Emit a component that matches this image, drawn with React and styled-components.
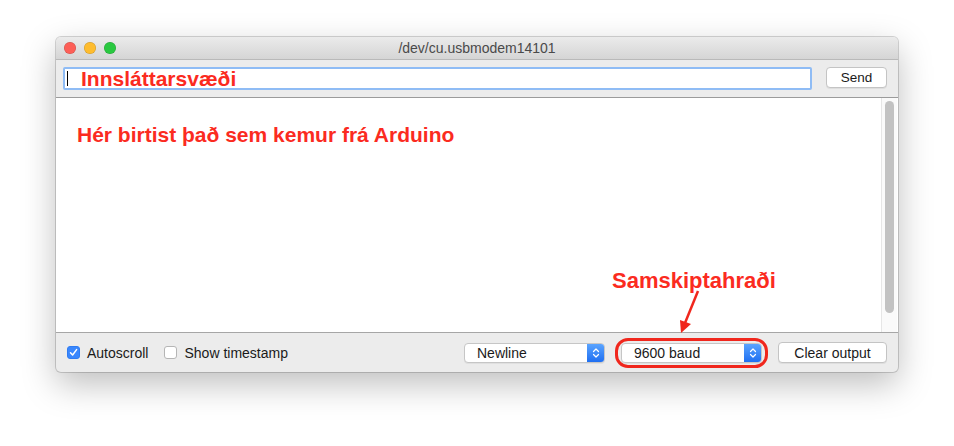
import React from 'react';
import styled, { createGlobalStyle } from 'styled-components';

const Global = createGlobalStyle`
  html, body {
    margin: 0;
    background: #ffffff;
  }
  body {
    font-family: "Liberation Sans", Arial, sans-serif;
  }
`;

const Page = styled.div`
  width: 954px;
  height: 446px;
  padding: 37px 0 0 56px;
  box-sizing: border-box;
`;

const Window = styled.div`
  position: relative;
  width: 842px;
  height: 335px;
  display: flex;
  flex-direction: column;
  border-radius: 5px;
  background: #ececec;
  box-shadow: 0 0 0 1px rgba(0, 0, 0, 0.16), 0 12px 34px rgba(0, 0, 0, 0.26);
  overflow: hidden;
`;

const TitleBar = styled.div`
  height: 22px;
  flex: none;
  display: flex;
  align-items: center;
  justify-content: center;
  position: relative;
  background: linear-gradient(#ebebeb, #d5d5d5);
  border-bottom: 1px solid #b9b9b9;
  font-size: 14px;
  color: #4a4a4a;
`;

const Lights = styled.div`
  position: absolute;
  left: 8px;
  top: 5px;
  display: flex;
  gap: 8px;
`;

const Light = styled.span`
  width: 12px;
  height: 12px;
  border-radius: 50%;
  background: ${(p) => p.color};
  box-shadow: inset 0 0 0 0.5px rgba(0, 0, 0, 0.2);
`;

const InputRow = styled.div`
  flex: none;
  display: flex;
  align-items: flex-start;
  padding: 7px 11px 7px 7px;
  gap: 14px;
  background: #ececec;
`;

const Field = styled.div`
  flex: 1;
  height: 19px;
  display: flex;
  align-items: center;
  background: #ffffff;
  border: 2px solid #8fbcf5;
  border-radius: 2px;
  padding-left: 2px;
`;

const Caret = styled.span`
  width: 1px;
  height: 15px;
  background: #000000;
`;

const Big = styled.span`
  font-weight: bold;
  font-size: ${(p) => p.size || 21}px;
  color: #fb2b1f;
  white-space: nowrap;
`;

const FieldText = styled(Big)`
  margin-left: 13px;
  line-height: 19px;
`;

const Button = styled.button`
  height: 21px;
  padding: 0;
  width: ${(p) => p.width}px;
  background: #ffffff;
  border: 1px solid #c4c4c4;
  border-radius: 4px;
  box-shadow: 0 1px 0 rgba(0, 0, 0, 0.06);
  font-family: "Liberation Sans", Arial, sans-serif;
  font-size: ${(p) => p.size || 14}px;
  color: #1a1a1a;
`;

const Output = styled.div`
  flex: none;
  height: 234px;
  display: flex;
  background: #ffffff;
  border-top: 1px solid #9b9b9b;
  border-bottom: 1px solid #a6a6a6;
`;

const OutputText = styled.div`
  flex: 1;
  padding: 25px 0 0 21px;
`;

const ScrollTrack = styled.div`
  width: 16px;
  flex: none;
  margin-right: 1px;
  background: #fafafa;
  border-left: 1px solid #e6e6e6;
  padding: 3px 0 0 3px;
  box-sizing: border-box;
`;

const Thumb = styled.div`
  width: 9px;
  height: 212px;
  border-radius: 5px;
  background: #c2c2c2;
`;

const BottomBar = styled.div`
  flex: 1;
  display: flex;
  align-items: center;
  padding: 0 11px;
  font-size: 14px;
  color: #1a1a1a;
`;

const Check = styled.label`
  display: flex;
  align-items: center;
  gap: 7px;
  margin-right: ${(p) => p.gap || 0}px;
`;

const Box = styled.span`
  width: 13px;
  height: 13px;
  box-sizing: border-box;
  border-radius: 3px;
  display: flex;
  align-items: center;
  justify-content: center;
  background: ${(p) => (p.checked ? '#3a87fd' : '#ffffff')};
  border: 1px solid ${(p) => (p.checked ? '#2f7cf2' : '#b5b5b5')};
`;

const Spacer = styled.div`
  flex: 1;
`;

const Select = styled.div`
  width: 141px;
  height: 20px;
  box-sizing: border-box;
  display: flex;
  align-items: center;
  background: #ffffff;
  border: 1px solid #c6c6c6;
  border-radius: 4px;
  overflow: hidden;
  box-shadow: 0 1px 0 rgba(0, 0, 0, 0.05);
`;

const SelectLabel = styled.span`
  flex: 1;
  padding-left: 12px;
`;

const Stepper = styled.span`
  width: 17px;
  height: 100%;
  display: flex;
  align-items: center;
  justify-content: center;
  background: linear-gradient(#5aa4ff, #1f6ff1);
`;

const Ring = styled.div`
  margin: 0 10px;
  padding: 2px 3px;
  border: 3px solid #f0271d;
  border-radius: 13px;
`;

const Callout = styled.div`
  position: absolute;
  left: 556px;
  top: 231px;
`;

const Arrow = styled.svg`
  position: absolute;
  left: 614px;
  top: 252px;
`;

function Chevrons() {
  return (
    <svg width="8" height="12" viewBox="0 0 8 12">
      <path d="M1.5 4.5 L4 2 L6.5 4.5 M1.5 7.5 L4 10 L6.5 7.5" fill="none" stroke="#fff" strokeWidth="1.2" strokeLinecap="round" strokeLinejoin="round" />
    </svg>
  );
}

export default function App() {
  return (
    <Page>
      <Global />
      <Window>
        <TitleBar>
          <Lights>
            <Light color="#fd5f57" />
            <Light color="#febc2e" />
            <Light color="#29c840" />
          </Lights>
          /dev/cu.usbmodem14101
        </TitleBar>

        <InputRow>
          <Field>
            <Caret />
            <FieldText>Innsláttarsvæði</FieldText>
          </Field>
          <Button width={61} size={13.5}>Send</Button>
        </InputRow>

        <Output>
          <OutputText>
            <Big>Hér birtist það sem kemur frá Arduino</Big>
          </OutputText>
          <ScrollTrack>
            <Thumb />
          </ScrollTrack>
        </Output>

        <BottomBar>
          <Check gap={16}>
            <Box checked>
              <svg width="9" height="9" viewBox="0 0 9 9">
                <path d="M1.5 4.8 L3.6 7 L7.6 1.6" fill="none" stroke="#fff" strokeWidth="1.5" strokeLinecap="round" strokeLinejoin="round" />
              </svg>
            </Box>
            Autoscroll
          </Check>
          <Check>
            <Box />
            Show timestamp
          </Check>
          <Spacer />
          <Select>
            <SelectLabel>Newline</SelectLabel>
            <Stepper><Chevrons /></Stepper>
          </Select>
          <Ring>
            <Select>
              <SelectLabel>9600 baud</SelectLabel>
              <Stepper><Chevrons /></Stepper>
            </Select>
          </Ring>
          <Button width={109}>Clear output</Button>
        </BottomBar>

        <Callout>
          <Big size={22}>Samskiptahraði</Big>
        </Callout>
        <Arrow width="40" height="46" viewBox="0 0 40 46">
          <line x1="28" y1="2" x2="15" y2="34" stroke="#f0271d" strokeWidth="2.5" />
          <polygon points="10,31 21,35 11,44" fill="#f0271d" />
        </Arrow>
      </Window>
    </Page>
  );
}
